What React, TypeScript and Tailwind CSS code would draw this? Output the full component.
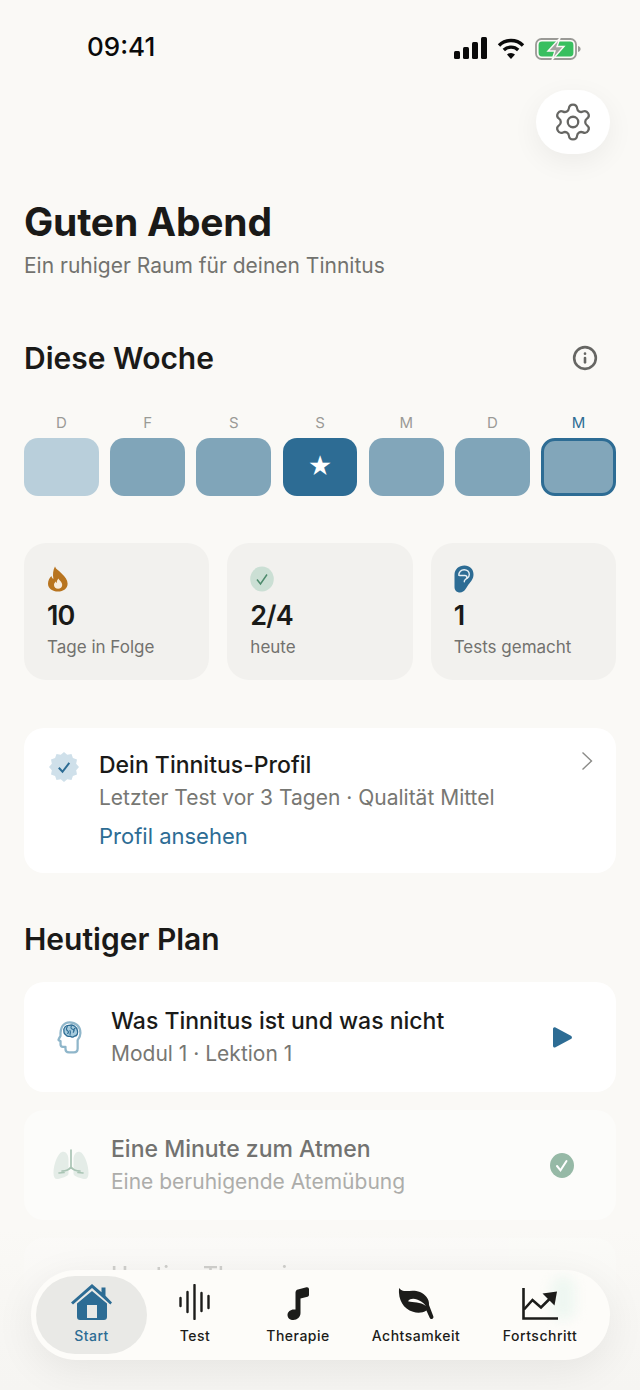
import { Info, Settings } from "lucide-react";

const DAYS = [
  { label: "D", tile: "bg-[#b9cfdb]" },
  { label: "F", tile: "bg-[#80a5b9]" },
  { label: "S", tile: "bg-[#80a5b9]" },
  { label: "S", tile: "bg-[#2d6c94]", star: true },
  { label: "M", tile: "bg-[#82a6ba]" },
  { label: "D", tile: "bg-[#80a5b9]" },
  { label: "M", tile: "bg-[#82a6ba] border-[3px] border-[#2d6c94]", today: true },
];

function badgePoints() {
  const pts: string[] = [];
  for (let i = 0; i < 24; i++) {
    const r = i % 2 === 0 ? 15 : 12.6;
    const a = (i * Math.PI) / 12;
    pts.push(`${(15 + r * Math.sin(a)).toFixed(2)},${(15 - r * Math.cos(a)).toFixed(2)}`);
  }
  return pts.join(" ");
}

function StatusIcons() {
  return (
    <div className="flex items-center gap-[10px]">
      <svg width="33" height="24" viewBox="0 0 33 24" fill="#0a0a0a">
        <rect x="0" y="15" width="6" height="8" rx="1.5" />
        <rect x="9" y="11" width="6" height="12" rx="1.5" />
        <rect x="18" y="6" width="6" height="17" rx="1.5" />
        <rect x="27" y="1" width="6" height="22" rx="1.5" />
      </svg>
      <svg width="28" height="24" viewBox="0 0 28 24" fill="none" stroke="#0a0a0a" strokeWidth="3.4">
        <path d="M2 9.5a17 17 0 0 1 24 0" />
        <path d="M6.8 14a10.4 10.4 0 0 1 14.4 0" />
        <path d="M14 23l-4-4.4a5.6 5.6 0 0 1 8 0z" fill="#0a0a0a" stroke="none" />
      </svg>
      <svg width="46" height="24" viewBox="0 0 46 24" fill="none">
        <rect x="1" y="3" width="40" height="20" rx="5.5" stroke="#9a9a96" strokeWidth="1.8" />
        <rect x="3.6" y="5.6" width="34.8" height="14.8" rx="3.4" fill="#38bf5f" />
        <path d="M43 10v6c1.8-.5 2.6-1.6 2.6-3s-.8-2.5-2.6-3z" fill="#9a9a96" />
        <path d="M25 2 13 15h7l-3 9 12-13.5h-7z" fill="#a3a3a0" stroke="#faf9f6" strokeWidth="1.4" />
      </svg>
    </div>
  );
}

function FlameIcon() {
  return (
    <svg width="22" height="26" viewBox="0 0 22 26">
      <path d="M8 .6c1 3 3.4 3.6 6.6 6.8 3.6 3.5 6 6.5 6 10.4 0 4.7-4.2 7.8-9.6 7.8S1 22.5 1 17.8c0-3.3 1.6-5.7 3.4-7.7.3 1.5 1 2.4 2 2.8C5.6 8.4 6 4 8 .6z" fill="#b8741f" />
      <path d="M11.6 12.6c.5 2 3.6 3.4 3.6 6.4 0 2.4-1.8 3.8-4.1 3.8S7 21.3 7 19c0-1.7 1-2.7 1.8-3.5.2.8.6 1.2 1.1 1.4-.3-1.6.3-3.1 1.7-4.3z" fill="#f7ebdc" />
    </svg>
  );
}

function DoneIcon() {
  return (
    <svg width="24" height="26" viewBox="0 0 24 26">
      <ellipse cx="12" cy="13" rx="11.8" ry="12.5" fill="#cbdfd4" />
      <path d="M7 13.5l3.5 4.5L17 8.5" fill="none" stroke="#4d8a6c" strokeWidth="1.5" />
    </svg>
  );
}

function EarIcon() {
  return (
    <svg width="20" height="28" viewBox="0 0 20 28">
      <path d="M10.5.5C15.8.5 19.5 4.3 19.5 9.3c0 4.7-2.6 7.3-5 10.3-2.2 2.8-3.6 7.9-8.5 7.9-3.2 0-5.500-2.100-5.500-5.500V9.800C.5 4.300 4.800.5 10.500.5z" fill="#2d6c94" />
      <path d="M4.800 10.300c0-3.300 2.300-5.600 5.400-5.600 3 0 5.100 2 5.100 4.800 0 1.800-.9 3-2 3.800M5.500 10.500h5.300c1.300 0 2.100.8 2.100 1.900 0 1.200-1 1.700-1.800 2.400-.6.5-.8 1.200-.8 2" fill="none" stroke="#e8f0f5" strokeWidth="1.4" strokeLinecap="round" />
    </svg>
  );
}

function ProfileBadge() {
  return (
    <svg width="30" height="30" viewBox="0 0 30 30">
      <polygon points={badgePoints()} fill="#cfe0ea" />
      <path d="M9.8 15.8l3.7 4 6.800-9" fill="none" stroke="#2d6c94" strokeWidth="2" />
    </svg>
  );
}

function HeadBrainIcon() {
  return (
    <svg width="26" height="33" viewBox="0 0 28 38" fill="none">
      <path d="M13.5 1.5c7 0 12.5 4.800 12.5 12.200 0 4-1.600 6.200-3.200 8.300v9.600c0 2.500-1.600 4.400-4.300 4.400h-5.700c-2.400 0-4-1.500-4-3.800v-2.500H5.600c-1.700 0-2.500-1.100-2.500-2.500v-4l-1.600-.7c-.9-.4-.9-1.200-.4-2l2-3.400C2.600 6.700 7 1.500 13.500 1.500z" fill="#fff" stroke="#8fb6ca" strokeWidth="2.600" strokeLinejoin="round" />
      <path d="M7 12c-1-4 2.500-7.500 6-7 4-1.500 9 1.500 9.500 6 1.200 3-.5 6.500-3.500 6.500-1.500 1.500-3.500 1-4.500 0-2.500.8-5-.5-5.500-2-1 .2-2-1.500-2-3.500z" fill="#a6cbdd" stroke="#2d6c94" strokeWidth="1.500" strokeLinejoin="round" />
      <path d="M11 6.500c-1.500 2-1.500 4 .5 5 1 .5 1 2-.2 2.800M15.500 6c-1 1.800 0 3.200 1.500 3.500 1.500.4 1.800 2 .8 3.500M19.800 8.500c-1.200.5-1.500 1.600-1 2.700M14 11c.8 1.500.5 3 0 4.500" stroke="#2d6c94" strokeWidth="1.300" strokeLinecap="round" />
    </svg>
  );
}

function LungsIcon() {
  return (
    <svg width="36" height="32" viewBox="0 0 36 32" fill="none">
      <path d="M9 3C5 4 .5 15 .5 24c0 4.500 1.500 6.500 4.500 6 3-.5 10-2.500 10.500-5V11C15.500 5 12.500 2 9 3z" fill="#e4ece7" />
      <path d="M27 3c4 1 8.500 12 8.500 21 0 4.500-1.500 6.500-4.500 6-3-.5-10-2.500-10.500-5V11C20.500 5 23.500 2 27 3z" fill="#e4ece7" />
      <path d="M18 1v17M18 18c-2 3-6 4-9 4M18 18c2 3 6 4 9 4M11 23.500l-5 .5M25 23.500l5 .5" stroke="#a9c4b4" strokeWidth="1.700" strokeLinecap="round" />
    </svg>
  );
}

function PlayIcon() {
  return (
    <svg width="19" height="21" viewBox="0 0 19 21">
      <path d="M0 2.200C0 .7 1.200-.1 2.500.6l15.400 8.200c1.400.7 1.400 2.600 0 3.300L2.500 20.300C1.200 21 0 20.200 0 18.700z" fill="#2d6c94" />
    </svg>
  );
}

function SmallCheck() {
  return (
    <svg width="24" height="25" viewBox="0 0 24 25">
      <ellipse cx="12" cy="12.5" rx="12" ry="12.5" fill="#96b9a6" />
      <path d="M7 13l3.500 4.300L16.500 8" fill="none" stroke="#fff" strokeWidth="2" strokeLinecap="round" />
    </svg>
  );
}

function HouseIcon() {
  return (
    <svg width="42" height="37" viewBox="0 0 42 37" fill="#2d6c94">
      <path d="M0 19.500 21 1l9.500 8.300V4.500h4v8.300L41 19.500l-1.700 1.900L21 5 2 21.400z" />
      <path fillRule="evenodd" d="M6 20.500 21 8l15 12.500V34c0 1.700-1.200 3-3 3H9c-1.800 0-3-1.300-3-3zM16 22v13h10V22z" />
    </svg>
  );
}

function WaveIcon() {
  return (
    <svg width="32" height="36" viewBox="0 0 32 36" fill="none" stroke="#1c1c1a" strokeWidth="2.400" strokeLinecap="round">
      <path d="M1.500 14v8M8.500 8v20M15.500 1v34M22.500 9v18M29.500 12v12" />
    </svg>
  );
}

function NoteIcon() {
  return (
    <svg width="22" height="33" viewBox="0 0 22 33" fill="#1c1c1a">
      <path d="M8.500 5.500C8.500 3.800 9.600 2.700 11 2.400L19.500.3c1.300-.3 2.500.4 2.500 2v5.400c0 1-.6 1.700-1.500 2L13.500 11.500V26c0 4-3.300 7-7.200 7C3 33 .5 31 .5 28c0-3.300 3-5.600 6.300-5.600.6 0 1.200.1 1.700.2z" />
    </svg>
  );
}

function LeafIcon() {
  return (
    <svg width="36" height="32" viewBox="0 0 36 32">
      <path d="M1 0c2 2.500 4 3 7 3 5-.3 9.500-1 14 1 5.500 2.500 9.500 7 9 13l4.300 11.300c.5 1.200-.2 2.300-1.200 2.700-1 .3-1.900-.2-2.300-1.100l-3.400-7.400c-3.500 2.500-9 2.800-13.400 1.300C5.500 21 0 12 1 0z" fill="#1c1c1a" />
      <path d="M10 13.200c2-2.700 5.500-3 9-1.700 3 1.100 6 2.500 9 6.500-3.200-2.200-6-3.100-9.200-3.500-3-.3-5.800-.4-8.800-1.300z" fill="#fdfcf9" />
    </svg>
  );
}

function ChartIcon() {
  return (
    <svg width="36" height="32" viewBox="0 0 36 32" fill="none">
      <path d="M1.500 0v30.500h34.500" stroke="#1c1c1a" strokeWidth="2.600" />
      <path d="M2 21.500 10.500 12l8.500 7.500 9-9" stroke="#1c1c1a" strokeWidth="2.600" />
      <path d="M20.500 5.500 35 3.500l-2.500 14z" fill="#1c1c1a" />
    </svg>
  );
}

const NAV = [
  { label: "Start", icon: <HouseIcon />, width: "w-[111px]", active: true },
  { label: "Test", icon: <WaveIcon />, width: "w-[96px]" },
  { label: "Therapie", icon: <NoteIcon />, width: "w-[110px]" },
  { label: "Achtsamkeit", icon: <LeafIcon />, width: "w-[126px]" },
  { label: "Fortschritt", icon: <ChartIcon />, width: "w-[122px]" },
];

const STATS = [
  { icon: <FlameIcon />, value: "10", label: "Tage in Folge" },
  { icon: <DoneIcon />, value: "2/4", label: "heute" },
  { icon: <EarIcon />, value: "1", label: "Tests gemacht" },
];

export default function App() {
  return (
    <div className="relative h-[1390px] w-[640px] overflow-hidden bg-[#faf9f6] [font-family:Inter,sans-serif] text-[#1a1a18]">
      {/* Status bar */}
      <div className="flex h-[60px] items-end justify-between pl-[87px] pr-[59px]">
        <span className="translate-y-[2px] text-[26px] leading-[30px] font-medium text-[#0a0a0a]">09:41</span>
        <StatusIcons />
      </div>

      {/* Settings */}
      <div className="mt-[30px] flex justify-end pr-[30px]">
        <button className="flex h-[64px] w-[74px] items-center justify-center rounded-[32px] bg-white shadow-[0_8px_28px_rgba(0,0,0,0.06)]">
          <Settings size={42} strokeWidth={1.3} color="#666663" />
        </button>
      </div>

      <div className="px-[24px]">
        {/* Greeting */}
        <h1 className="mt-[45px] text-[39px] leading-[46px] font-bold tracking-[-0.2px]">Guten Abend</h1>
        <p className="mt-[8px] text-[21px] leading-[26px] text-[#72726e]">Ein ruhiger Raum für deinen Tinnitus</p>

        {/* Week */}
        <div className="mt-[60px] flex items-center justify-between pr-[18px]">
          <h2 className="text-[30px] leading-[38px] font-semibold">Diese Woche</h2>
          <Info size={26} strokeWidth={2.4} color="#666663" />
        </div>
        <div className="mt-[36px] grid grid-cols-7 gap-x-[11.5px]">
          {DAYS.map((d, i) => (
            <div key={i} className="flex flex-col items-center">
              <span className={`text-[15px] leading-[20px] ${d.today ? "text-[#2d6c94]" : "text-[#9a9a96]"}`}>{d.label}</span>
              <div className={`mt-[5px] flex h-[58px] w-full items-center justify-center rounded-[14px] ${d.tile}`}>
                {d.star && <span className="text-[24px] leading-none text-white">★</span>}
              </div>
            </div>
          ))}
        </div>

        {/* Stats */}
        <div className="mt-[47px] grid grid-cols-3 gap-x-[18px]">
          {STATS.map((s) => (
            <div key={s.label} className="h-[137px] rounded-[22px] bg-[#f2f1ee] pl-[23px] pt-[23px]">
              <div className="flex h-[26px] items-center">{s.icon}</div>
              <div className="mt-[7px] text-[27px] leading-[34px] font-semibold tracking-[-0.8px]">{s.value}</div>
              <div className="mt-[2px] text-[17px] leading-[24px] text-[#72726e]">{s.label}</div>
            </div>
          ))}
        </div>

        {/* Profile */}
        <div className="mt-[48px] flex h-[145px] rounded-[20px] bg-white pl-[25px] pr-[23px] pt-[22px]">
          <div className="w-[50px] pt-[2px]">
            <ProfileBadge />
          </div>
          <div className="flex-1">
            <div className="text-[23px] leading-[30px] font-medium">Dein Tinnitus-Profil</div>
            <div className="mt-[3px] text-[21px] leading-[30px] text-[#777773]">Letzter Test vor 3 Tagen · Qualität Mittel</div>
            <div className="mt-[8px] text-[22px] leading-[30px] text-[#2d6c94]">Profil ansehen</div>
          </div>
          <svg width="12" height="20" viewBox="0 0 12 20" fill="none" stroke="#8b8b88" strokeWidth="1.4" className="mt-[1px]">
            <path d="M1.500 1.500 10.500 10l-9 8.500" />
          </svg>
        </div>

        {/* Plan */}
        <h2 className="mt-[46px] text-[30px] leading-[40px] font-semibold">Heutiger Plan</h2>
        <div className="mt-[23px] flex flex-col gap-[18px]">
          <div className="flex h-[110px] items-center rounded-[20px] bg-white pl-[33px] pr-[44px]">
            <div className="w-[54px]">
              <HeadBrainIcon />
            </div>
            <div className="flex-1">
              <div className="text-[23px] leading-[30px] font-medium">Was Tinnitus ist und was nicht</div>
              <div className="mt-[4px] text-[21px] leading-[28px] text-[#777773]">Modul 1 · Lektion 1</div>
            </div>
            <PlayIcon />
          </div>
          <div className="flex h-[110px] items-center rounded-[20px] bg-[#fcfcfa] pl-[29px] pr-[42px]">
            <div className="w-[58px]">
              <LungsIcon />
            </div>
            <div className="flex-1">
              <div className="text-[23px] leading-[30px] font-medium text-[#727270]">Eine Minute zum Atmen</div>
              <div className="mt-[4px] text-[21px] leading-[28px] text-[#adadaa]">Eine beruhigende Atemübung</div>
            </div>
            <SmallCheck />
          </div>
          <div className="flex h-[110px] rounded-[20px] bg-[#fcfcfa] pl-[87px] pt-[22px] opacity-60">
            <div className="text-[23px] leading-[30px] font-medium text-[#8c8c89]">Heutige Therapie</div>
          </div>
        </div>
      </div>

      {/* Fade behind the tab bar */}
      <div className="absolute inset-x-0 bottom-0 h-[162px] bg-gradient-to-b from-[#f7f6f3]/0 via-[#f7f6f3]/80 to-[#f6f5f2]" />

      {/* Tab bar */}
      <nav className="absolute left-[31px] top-[1270px] flex h-[90px] w-[579px] items-center overflow-hidden rounded-[45px] bg-[#fdfcf9] pl-[5px] shadow-[0_10px_40px_rgba(0,0,0,0.07)]">
        <div className="absolute left-[520px] top-[6px] h-[44px] w-[24px] rounded-full bg-[#eef7f1] blur-[6px]" />
        {NAV.map((n) => (
          <div
            key={n.label}
            className={`relative flex h-[78px] shrink-0 flex-col items-center justify-end pb-[9px] ${n.width} ${n.active ? "rounded-[39px] bg-[#e9e9e6]" : ""}`}
          >
            <div className="flex h-[37px] items-end">{n.icon}</div>
            <span className={`mt-[7px] text-[14px] leading-[18px] font-medium tracking-[0.5px] ${n.active ? "text-[#2d6c94]" : "text-[#1c1c1a]"}`}>
              {n.label}
            </span>
          </div>
        ))}
      </nav>
    </div>
  );
}
